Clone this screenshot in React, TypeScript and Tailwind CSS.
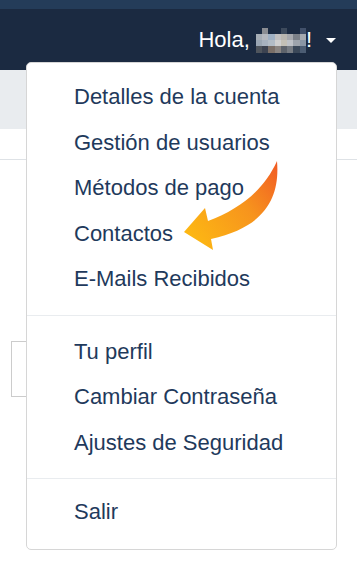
import React from "react";

const MOSAIC: string[][] = [
  ["#1b2a41", "#8b8d92", "#1b2a41", "#1b2a41", "#3d4a5c", "#1b2a41", "#1b2a41", "#41506a"],
  ["#a6adb5", "#b5b8be", "#9fb0c3", "#c0bfc0", "#b9b6b0", "#a6a8ad", "#7b8088", "#a4a9b0"],
  ["#9aa6b3", "#a7b2bf", "#b2bcc6", "#cfcfcf", "#c4c0b6", "#bfc2c7", "#9ea4ac", "#8895a5"],
  ["#4f555d", "#3c4351", "#7a6f68", "#8a8582", "#5e636b", "#767b82", "#3b4859", "#4b5c73"],
];

const GROUPS = [
  ["Detalles de la cuenta", "Gestión de usuarios", "Métodos de pago", "Contactos", "E-Mails Recibidos"],
  ["Tu perfil", "Cambiar Contraseña", "Ajustes de Seguridad"],
  ["Salir"],
];

function BlurredName() {
  return (
    <div className="grid grid-cols-[repeat(8,6.25px)] grid-rows-[repeat(4,6.25px)] shrink-0">
      {MOSAIC.flat().map((c, i) => (
        <span key={i} style={{ backgroundColor: c }} />
      ))}
    </div>
  );
}

function CurvedArrow() {
  return (
    <svg className="absolute left-0 top-0 pointer-events-none" width="357" height="571" viewBox="0 0 357 571">
      <defs>
        <linearGradient id="arrowGrad" x1="184" y1="232" x2="277" y2="160" gradientUnits="userSpaceOnUse">
          <stop offset="0" stopColor="#fdb813" />
          <stop offset="0.55" stopColor="#f7941d" />
          <stop offset="1" stopColor="#f15a24" />
        </linearGradient>
      </defs>
      <path
        d="M277 161 C280 197 266 227 211 239 L213 250 L184 232 L205 208 L208 221 C240 209 264 190 277 161 Z"
        fill="url(#arrowGrad)"
      />
    </svg>
  );
}

export default function App() {
  return (
    <div className="relative w-[357px] h-[571px] overflow-hidden bg-white" style={{ fontFamily: '"Liberation Sans", Arial, sans-serif' }}>
      {/* top navigation */}
      <div className="h-[9px] bg-[#243c59]" />
      <div className="h-[61px] bg-[#1b2a41] flex items-center justify-end pr-[21px] pt-[1px]">
        <span className="text-white text-[22px] leading-none whitespace-pre">Hola, </span>
        <BlurredName />
        <span className="text-white text-[22px] leading-none">!</span>
        <span className="ml-[14px] w-0 h-0 border-x-[5px] border-x-transparent border-t-[5px] border-t-white" />
      </div>

      {/* page under the menu */}
      <div className="h-[59px] bg-[#e9ecef]" />
      <div className="h-[30px]" />
      <div className="h-px bg-[#dee2e6]" />
      <div className="ml-[11px] mt-[181px] w-[60px] h-[56px] border border-[#cccccc]" />

      {/* dropdown */}
      <div className="absolute left-[26px] top-[62px] w-[311px] bg-white border border-[#d6d6d6] rounded-[5px] pt-[11px] pb-[14px]">
        {GROUPS.map((group, gi) => (
          <div key={gi}>
            {gi === 1 && <div className="h-px bg-[#e9ecef] my-[13px]" />}
            {gi === 2 && <div className="h-px bg-[#e9ecef] mt-[13px] mb-[10px]" />}
            {group.map((label) => (
              <div key={label} className="pl-[47px] h-[45.5px] leading-[45.5px] text-[22px] text-[#1f3a5c] whitespace-nowrap">
                {label}
              </div>
            ))}
          </div>
        ))}
      </div>

      <CurvedArrow />
    </div>
  );
}
